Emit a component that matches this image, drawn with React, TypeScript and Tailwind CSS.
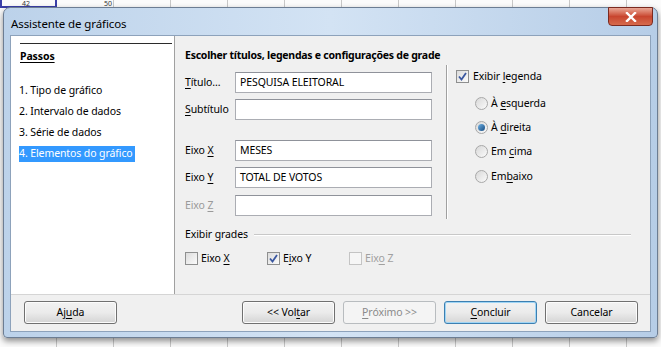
import { FunctionComponent, ReactNode } from 'react';

const font = { fontFamily: '"Noto Sans", "Open Sans", sans-serif' };

const U: FunctionComponent<{ children: ReactNode }> = ({ children }) => (
  <span className="underline underline-offset-2">{children}</span>
);

const CheckBox: FunctionComponent<{ checked?: boolean; disabled?: boolean }> = ({
  checked,
  disabled,
}) => (
  <span
    className={`relative flex h-[13px] w-[13px] shrink-0 items-center justify-center border ${
      disabled ? 'border-[#c4c4c4] bg-[#f6f6f6]' : 'border-[#8e8f8f] bg-gradient-to-br from-[#dcdcdc] to-[#fbfbfb]'
    }`}
  >
    {checked && (
      <svg width="9" height="9" viewBox="0 0 9 9">
        <path d="M1 4.5 L3.5 7.5 L8 1" fill="none" stroke="#3a57a0" strokeWidth="1.8" />
      </svg>
    )}
  </span>
);

const Radio: FunctionComponent<{ checked?: boolean }> = ({ checked }) => (
  <span className="flex h-[13px] w-[13px] shrink-0 items-center justify-center rounded-full border border-[#a8a8a8] bg-gradient-to-br from-[#d8d8d8] to-[#fbfbfb]">
    {checked && (
      <span className="h-[7px] w-[7px] rounded-full bg-gradient-to-br from-[#6fb2e6] to-[#174d82]" />
    )}
  </span>
);

const Field: FunctionComponent<{ label: ReactNode; value?: string; dim?: boolean; className?: string }> = ({
  label,
  value,
  dim,
  className,
}) => (
  <div className={`flex h-[21px] items-center ${className ?? ''}`}>
    <span className={`w-[50px] ${dim ? 'text-[#9a9a9a]' : 'text-black'}`}>{label}</span>
    <div className="flex h-[21px] w-[197px] items-center border border-[#abadb3] border-t-[#8f929a] bg-white px-[4px] text-black">
      {value}
    </div>
  </div>
);

const Button: FunctionComponent<{ children: ReactNode; variant?: 'default' | 'disabled' }> = ({
  children,
  variant,
}) => (
  <div
    className={`flex h-[23px] w-[93px] items-center justify-center rounded-[3px] border ${
      variant === 'disabled'
        ? 'border-[#b8bcbf] bg-[#f4f4f4] text-[#8a8a8a]'
        : variant === 'default'
          ? 'border-[#3c7fb1] bg-gradient-to-b from-[#f2f2f2] via-[#ebebeb] to-[#d6d6d6] text-black shadow-[inset_0_0_0_1px_#9fd5f5]'
          : 'border-[#707070] bg-gradient-to-b from-[#f2f2f2] via-[#ebebeb] to-[#d4d4d4] text-black shadow-[inset_0_0_0_1px_#fcfcfc]'
    }`}
  >
    {children}
  </div>
);

const steps = ['1. Tipo de gráfico', '2. Intervalo de dados', '3. Série de dados', '4. Elementos do gráfico'];

export default function App() {
  return (
    <div
      className="relative h-[347px] w-[661px] overflow-hidden bg-white text-[10.5px] tracking-[-0.1px]"
      style={font}
    >
      {/* spreadsheet behind the dialog */}
      <div className="absolute inset-0 flex bg-[#fbfbfb]">
        {Array.from({ length: 12 }).map((_, i) => (
          <div key={i} className="h-full w-[57px] shrink-0 border-r border-[#c8c8c8]" />
        ))}
      </div>
      <div className="absolute left-[22px] top-0 text-[7px] leading-[7px] text-[#333]">42</div>
      <div className="absolute left-[104px] top-0 text-[7px] leading-[7px] text-[#333]">50</div>
      <div className="absolute left-0 top-0 h-[8px] w-[57px] border-2 border-t-0 border-[#3a3fa8]" />

      {/* dialog window */}
      <div className="absolute left-[3px] top-[7px] flex h-[331px] w-[655px] flex-col rounded-t-[7px] rounded-b-[4px] border border-[#6c7d93] bg-gradient-to-r from-[#bcd2ea] via-[#d3e3f4] to-[#b6cde7] shadow-[0_3px_6px_rgba(0,0,0,0.45)]">
        <div className="flex h-[27px] shrink-0 items-start justify-between">
          <span className="pl-[7px] pt-[7px] text-[11.5px] text-black">Assistente de gráficos</span>
          <div className="mr-[4px] mt-[-1px] flex h-[19px] w-[45px] items-center justify-center rounded-b-[4px] border border-[#7b2a20] bg-gradient-to-b from-[#e9a796] via-[#c8452f] to-[#d66a4c]">
            <svg width="12" height="10" viewBox="0 0 12 10">
              <path d="M2 1 L10 9 M10 1 L2 9" stroke="#ffffff" strokeWidth="2.4" strokeLinecap="square" />
            </svg>
          </div>
        </div>

        <div className="mx-[6px] mb-[5px] flex flex-1 flex-col border border-[#8da2bb] bg-[#f0f0f0]">
          <div className="flex h-[259px] border-b border-[#d5d5d5]">
            {/* steps */}
            <div className="flex w-[164px] flex-col border-r border-[#a0a0a0] bg-white">
              <div className="ml-[9px] mr-[2px] mt-[7px] h-px bg-[#2b2b2b]" />
              <div className="ml-[9px] mt-[5px] font-bold text-black">
                <span className="underline underline-offset-2">Passos</span>
              </div>
              <div className="mt-[18px] flex flex-col gap-[4px] pl-[8px] text-black">
                {steps.map((s, i) => (
                  <div key={s} className="flex h-[17px] items-center">
                    <span className={i === 3 ? 'bg-[#3399ff] pr-[2px] text-white' : ''}>{s}</span>
                  </div>
                ))}
              </div>
            </div>

            {/* options */}
            <div className="flex flex-1 flex-col pl-[10px] pr-[19px] pt-[12px]">
              <div className="h-[16px] font-bold tracking-[-0.25px] text-black">
                Escolher títulos, legendas e configurações de grade
              </div>
              <div className="mt-[1px] flex h-[154px]">
                <div className="flex w-[261px] flex-col pt-[7px]">
                  <Field label={<><U>T</U>ítulo...</>} value="PESQUISA ELEITORAL" />
                  <Field className="mt-[6px]" label={<><U>S</U>ubtítulo</>} />
                  <Field className="mt-[20px]" label={<>Eixo <U>X</U></>} value="MESES" />
                  <Field className="mt-[6px]" label={<>Eixo <U>Y</U></>} value="TOTAL DE VOTOS" />
                  <Field className="mt-[7px]" dim label={<>Eixo <U>Z</U></>} />
                </div>
                <div className="w-px bg-[#a0a0a0] shadow-[1px_0_0_#ffffff]" />
                <div className="flex flex-col pl-[9px] pt-[4px] text-black">
                  <div className="flex h-[15px] items-center gap-[4px]">
                    <CheckBox checked />
                    <span>Exibir <U>l</U>egenda</span>
                  </div>
                  <div className="mt-[12px] flex flex-col gap-[9px] pl-[19px]">
                    <div className="flex h-[15px] items-center gap-[3px]">
                      <Radio />
                      <span>À <U>e</U>squerda</span>
                    </div>
                    <div className="flex h-[15px] items-center gap-[3px]">
                      <Radio checked />
                      <span>À <U>d</U>ireita</span>
                    </div>
                    <div className="flex h-[15px] items-center gap-[3px]">
                      <Radio />
                      <span>Em <U>c</U>ima</span>
                    </div>
                    <div className="mt-[1px] flex h-[15px] items-center gap-[3px]">
                      <Radio />
                      <span>Em<U>b</U>aixo</span>
                    </div>
                  </div>
                </div>
              </div>

              <div className="mt-[8px] flex h-[15px] items-center gap-[6px] text-black">
                <span>Exibir grades</span>
                <div className="h-px flex-1 bg-[#c8c8c8] shadow-[0_1px_0_#ffffff]" />
              </div>
              <div className="mt-[9px] flex h-[15px] items-center">
                <div className="flex w-[82px] items-center gap-[3px]">
                  <CheckBox />
                  <span>Eixo <U>X</U></span>
                </div>
                <div className="flex w-[82px] items-center gap-[3px]">
                  <CheckBox checked />
                  <span>E<U>i</U>xo Y</span>
                </div>
                <div className="flex w-[82px] items-center gap-[3px] text-[#a0a0a0]">
                  <CheckBox disabled />
                  <span>Eix<U>o</U> Z</span>
                </div>
              </div>
            </div>
          </div>

          {/* buttons */}
          <div className="flex items-start pl-[13px] pr-[12px] pt-[6px]">
            <Button>
              Aj<U>u</U>da
            </Button>
            <div className="ml-auto flex gap-[8px]">
              <Button>
                {'<< Vol'}
                <U>t</U>ar
              </Button>
              <Button variant="disabled">
                <U>P</U>
                {'róximo >>'}
              </Button>
              <Button variant="default">
                <U>C</U>oncluir
              </Button>
              <Button>Cancelar</Button>
            </div>
          </div>
        </div>
      </div>
    </div>
  );
}
